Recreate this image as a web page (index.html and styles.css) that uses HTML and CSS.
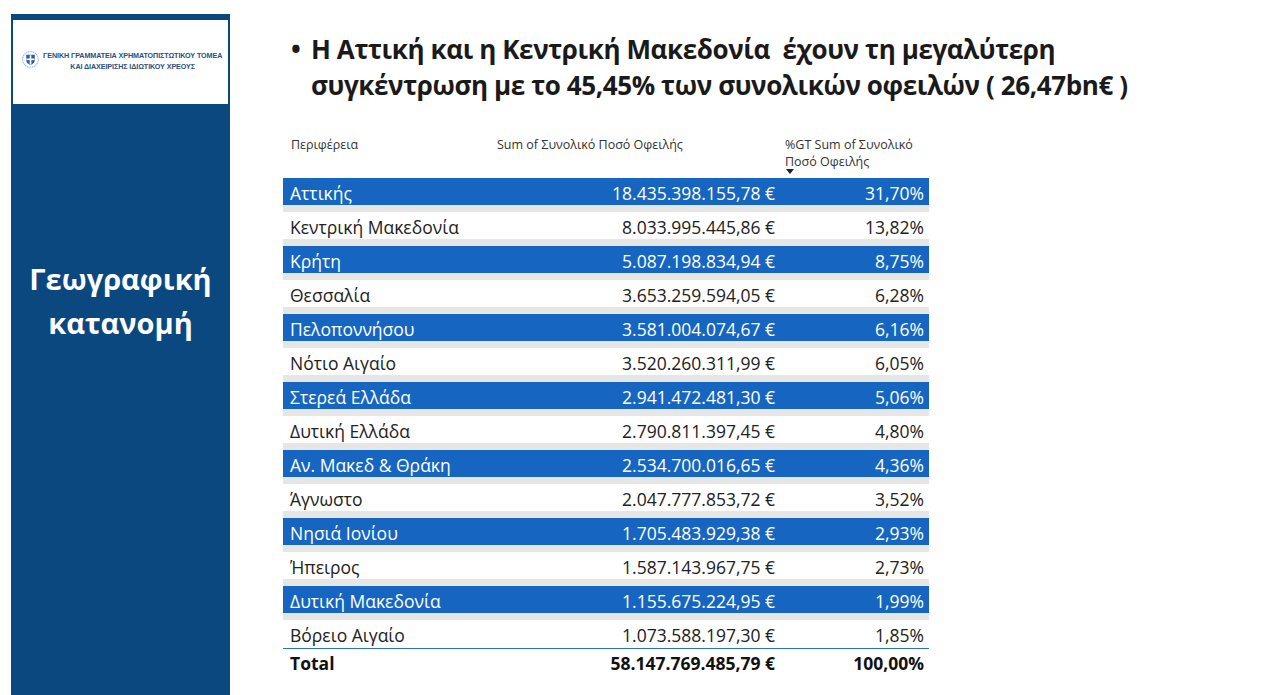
FILE: index.html
```html
<!DOCTYPE html>
<html lang="el">
<head>
<meta charset="utf-8">
<title>Γεωγραφική κατανομή</title>
<link rel="stylesheet" href="styles.css">
</head>
<body>
<div class="page">
  <aside class="sidebar">
    <div class="logo-box">
      <svg class="emblem" viewBox="0 0 20 20" width="17" height="17" aria-hidden="true">
        <circle cx="10" cy="10" r="9.2" fill="none" stroke="#9db3cf" stroke-width="1.4" stroke-dasharray="1.4 0.8"/>
        <path d="M5 4.5 H15 V11 C15 14 12.5 15.6 10 16.5 C7.5 15.6 5 14 5 11 Z" fill="#2c5a9a"/>
        <rect x="9" y="5" width="2" height="11" fill="#fff"/>
        <rect x="5.3" y="8.8" width="9.4" height="2" fill="#fff"/>
      </svg>
      <div class="logo-text">
        <span>ΓΕΝΙΚΗ ΓΡΑΜΜΑΤΕΙΑ ΧΡΗΜΑΤΟΠΙΣΤΩΤΙΚΟΥ ΤΟΜΕΑ</span>
        <span>ΚΑΙ ΔΙΑΧΕΙΡΙΣΗΣ ΙΔΙΩΤΙΚΟΥ ΧΡΕΟΥΣ</span>
      </div>
    </div>
    <h2 class="section-title">Γεωγραφική<br>κατανομή</h2>
  </aside>

  <main class="content">
    <h1 class="headline">
      <span class="bullet">•</span>
      <span class="headline-text">Η Αττική και η Κεντρική Μακεδονία&nbsp; έχουν τη μεγαλύτερη συγκέντρωση με το 45,45% των συνολικών οφειλών ( 26,47bn€ )</span>
    </h1>

    <div class="matrix">
      <div class="hdr">
        <div class="c1">Περιφέρεια</div>
        <div class="c2">Sum of Συνολικό Ποσό Οφειλής</div>
        <div class="c3">%GT Sum of Συνολικό<br>Ποσό Οφειλής<span class="sort-arrow"></span></div>
      </div>
      <div class="row blue"><div class="c1">Αττικής</div><div class="c2">18.435.398.155,78 €</div><div class="c3">31,70%</div></div>
      <div class="row"><div class="c1">Κεντρική Μακεδονία</div><div class="c2">8.033.995.445,86 €</div><div class="c3">13,82%</div></div>
      <div class="row blue"><div class="c1">Κρήτη</div><div class="c2">5.087.198.834,94 €</div><div class="c3">8,75%</div></div>
      <div class="row"><div class="c1">Θεσσαλία</div><div class="c2">3.653.259.594,05 €</div><div class="c3">6,28%</div></div>
      <div class="row blue"><div class="c1">Πελοποννήσου</div><div class="c2">3.581.004.074,67 €</div><div class="c3">6,16%</div></div>
      <div class="row"><div class="c1">Νότιο Αιγαίο</div><div class="c2">3.520.260.311,99 €</div><div class="c3">6,05%</div></div>
      <div class="row blue"><div class="c1">Στερεά Ελλάδα</div><div class="c2">2.941.472.481,30 €</div><div class="c3">5,06%</div></div>
      <div class="row"><div class="c1">Δυτική Ελλάδα</div><div class="c2">2.790.811.397,45 €</div><div class="c3">4,80%</div></div>
      <div class="row blue"><div class="c1">Αν. Μακεδ &amp; Θράκη</div><div class="c2">2.534.700.016,65 €</div><div class="c3">4,36%</div></div>
      <div class="row"><div class="c1">Άγνωστο</div><div class="c2">2.047.777.853,72 €</div><div class="c3">3,52%</div></div>
      <div class="row blue"><div class="c1">Νησιά Ιονίου</div><div class="c2">1.705.483.929,38 €</div><div class="c3">2,93%</div></div>
      <div class="row"><div class="c1">Ήπειρος</div><div class="c2">1.587.143.967,75 €</div><div class="c3">2,73%</div></div>
      <div class="row blue"><div class="c1">Δυτική Μακεδονία</div><div class="c2">1.155.675.224,95 €</div><div class="c3">1,99%</div></div>
      <div class="row last"><div class="c1">Βόρειο Αιγαίο</div><div class="c2">1.073.588.197,30 €</div><div class="c3">1,85%</div></div>
      <div class="row total"><div class="c1">Total</div><div class="c2">58.147.769.485,79 €</div><div class="c3">100,00%</div></div>
    </div>
  </main>
</div>
</body>
</html>
```

FILE: styles.css
```css
html, body {
  margin: 0;
  padding: 0;
  background: #ffffff;
}

.page {
  display: flex;
  align-items: stretch;
  min-height: 695px;
  font-family: "Open Sans", "Noto Sans", sans-serif;
}

.sidebar {
  margin: 14px 0 0 11px;
  width: 219px;
  box-sizing: border-box;
  padding: 6px 2px 0 2px;
  background: #0b487f;
  display: flex;
  flex-direction: column;
}

.logo-box {
  background: #ffffff;
  height: 84px;
  display: flex;
  align-items: center;
  padding: 0 0 0 9px;
  gap: 4px;
}

.emblem {
  flex: none;
  margin-top: -6px;
}

.logo-text {
  display: flex;
  flex-direction: column;
  align-items: center;
  font-family: "Liberation Sans", sans-serif;
  font-weight: bold;
  font-size: 7.2px;
  line-height: 11px;
  color: #2b4f7e;
  letter-spacing: -0.1px;
  margin-top: -2px;
}

.section-title {
  margin: 153px 0 0 0;
  text-align: center;
  color: #ffffff;
  font-family: "Open Sans", sans-serif;
  font-weight: bold;
  font-size: 29px;
  line-height: 44px;
}

.content {
  padding: 0 0 0 61px;
}

.headline {
  display: flex;
  margin: 31px 0 0 0;
  font-family: "Open Sans", sans-serif;
  font-weight: bold;
  font-size: 26px;
  line-height: 36px;
  color: #1a1a1a;
  width: 900px;
  letter-spacing: -0.4px;
}

.bullet {
  width: 20px;
  flex: none;
}

.headline-text {
  width: 850px;
}

.matrix {
  margin: 33px 0 0 -8px;
  width: 646px;
  color: #222222;
}

.hdr, .row {
  display: grid;
  grid-template-columns: 207px 290px 149px;
}

.hdr {
  font-size: 12.5px;
  line-height: 17px;
  color: #333333;
  height: 42px;
}

.hdr .c1 { padding-left: 8px; }
.hdr .c2 { padding-left: 7px; }
.hdr .c3 { padding-left: 5px; position: relative; }

.sort-arrow {
  position: absolute;
  left: 6px;
  top: 33px;
  width: 0;
  height: 0;
  border-left: 4px solid transparent;
  border-right: 4px solid transparent;
  border-top: 5px solid #222222;
}

.row {
  height: 27px;
  line-height: 31px;
  font-size: 17.5px;
  border-bottom: 7px solid #e6e6e6;
}

.row .c1 { padding-left: 7px; white-space: nowrap; }
.row .c2 { text-align: right; padding-right: 5px; }
.row .c3 { text-align: right; padding-right: 5px; }

.row.blue {
  background: #1666c1;
  color: #ffffff;
}

.row.last {
  height: 28px;
  border-bottom: 1px solid #2a73c4;
}

.row.total {
  font-weight: bold;
  height: 29px;
  line-height: 29px;
  border-bottom: none;
  color: #111111;
}
```
